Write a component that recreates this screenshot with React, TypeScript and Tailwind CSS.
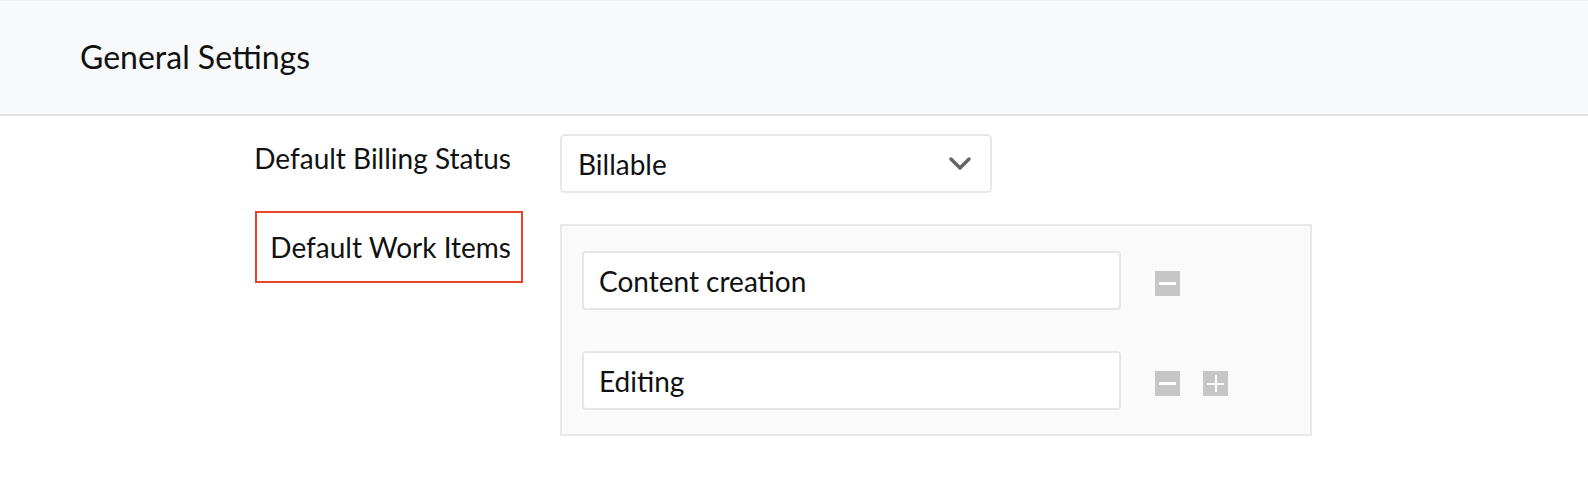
import * as React from "react"

const font = { fontFamily: "Lato, 'Noto Sans', sans-serif" }

// Small square action buttons next to work item inputs
const MinusButton: React.FC = () => (
  <button className="flex h-[25px] w-[25px] items-center justify-center bg-[#c6c6c6]">
    <span className="block h-[3px] w-[17px] bg-white" />
  </button>
)

const PlusButton: React.FC = () => (
  <button className="relative flex h-[25px] w-[25px] items-center justify-center bg-[#c6c6c6]">
    <span className="absolute h-[2px] w-[17px] bg-white" />
    <span className="absolute h-[17px] w-[2px] bg-white" />
  </button>
)

const ChevronDown: React.FC = () => (
  <svg width="22" height="14" viewBox="0 0 22 14" fill="none" xmlns="http://www.w3.org/2000/svg">
    <path d="M2 2l9 9 9-9" stroke="#666666" strokeWidth="3.4" strokeLinecap="round" strokeLinejoin="round" />
  </svg>
)

function WorkItem({ value, last }: { value: string; last?: boolean }) {
  return (
    <div className="flex items-start">
      <div className="flex h-[59px] w-[539px] items-center rounded-[4px] border-2 border-[#e6e6e6] bg-white pl-[15px] text-[28px] leading-[42px] text-[#111]">
        {value}
      </div>
      <div className="ml-[34px] mt-[20px] flex gap-[23px]">
        <MinusButton />
        {last && <PlusButton />}
      </div>
    </div>
  )
}

export default function App() {
  return (
    <div className="min-h-screen w-full bg-white" style={font}>
      <div className="flex h-[116px] items-center border-t border-b-2 border-t-[#eef0f2] border-b-[#e4e4e4] bg-[#f8f9fb] pl-[80px] pb-[2px]">
        <h1 className="text-[32px] leading-[48px] text-[#111]">General Settings</h1>
      </div>

      <div className="flex flex-col pt-[18px]">
        {/* Billing status row */}
        <div className="flex items-start">
          <div className="flex w-[523px] justify-end pr-[12px] pt-[3px]">
            <span className="text-[28px] leading-[42px] text-[#111]">Default Billing Status</span>
          </div>
          <div className="ml-[37px] flex h-[59px] w-[432px] items-center justify-between rounded-[5px] border-2 border-[#e8e8e8] bg-white pl-[16px] pr-[19px]">
            <span className="text-[28px] leading-[42px] text-[#111]">Billable</span>
            <ChevronDown />
          </div>
        </div>

        {/* Work items row */}
        <div className="mt-[31px] flex items-start">
          <div className="flex w-[523px] justify-end">
            <div className="-mt-[13px] border-2 border-[#e8432c] pb-[13px] pl-[13px] pr-[10px] pt-[13px]">
              <span className="block text-[28px] leading-[42px] text-[#111]">Default Work Items</span>
            </div>
          </div>
          <div className="ml-[37px] flex w-[752px] flex-col gap-[41px] border-2 border-[#e8e8e8] bg-[#fafafa] pb-[24px] pl-[20px] pt-[25px]">
            <WorkItem value="Content creation" />
            <WorkItem value="Editing" last />
          </div>
        </div>
      </div>
    </div>
  )
}
